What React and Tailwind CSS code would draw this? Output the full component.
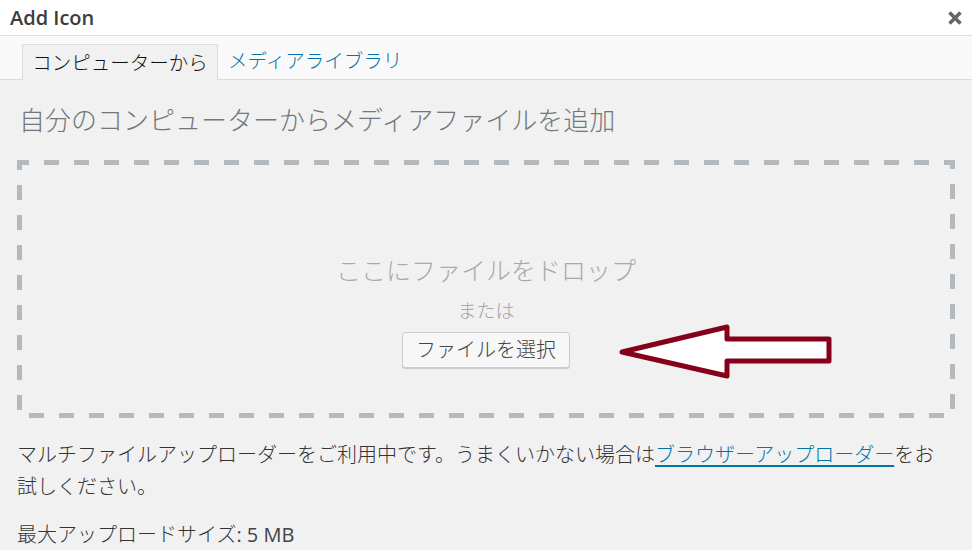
const font = { fontFamily: "'Open Sans', 'Noto Sans CJK JP', sans-serif" };

function CloseIcon() {
  return (
    <svg width="16" height="16" viewBox="0 0 16 16" className="block">
      <path d="M2.5 2.5 L13.5 13.5 M13.5 2.5 L2.5 13.5" stroke="#666" strokeWidth="3.6" strokeLinecap="butt" />
    </svg>
  );
}

function Arrow() {
  return (
    <svg
      width="220"
      height="60"
      viewBox="0 0 220 60"
      className="absolute left-[616px] top-[320px] pointer-events-none"
    >
      <path
        d="M6 32 L111 7 L111 19 L213 19 L213 41 L111 41 L111 56 Z"
        fill="#fff"
        stroke="#86001b"
        strokeWidth="5"
        strokeLinejoin="round"
      />
    </svg>
  );
}

// dashed outline of the drop zone, 5px dashes of 15 on / 15 off
function DashedFrame() {
  return (
    <svg className="absolute inset-0 w-full h-full pointer-events-none" preserveAspectRatio="none">
      <rect
        x="2.5"
        y="2.5"
        width="933"
        height="253"
        fill="none"
        stroke="#b4b9be"
        strokeWidth="5"
        strokeDasharray="15 15"
        strokeDashoffset="5.5"
      />
    </svg>
  );
}

export default function App() {
  return (
    <div className="relative w-[972px] h-[550px] overflow-hidden bg-[#f1f1f1]" style={font}>
      <header className="h-[36px] bg-white border-b border-[#dddddd] flex items-center justify-between pl-[10px] pr-[7px]">
        <h1 className="text-[20px] font-semibold text-[#3c3c3c] leading-none">Add Icon</h1>
        <button type="button" className="w-[20px] h-[20px] flex items-center justify-center">
          <CloseIcon />
        </button>
      </header>

      <nav className="h-[44px] bg-[#f9f9f9] border-b border-[#dddddd] flex items-end pl-[22px] font-light">
        <span className="w-[196px] h-[36px] -mb-px flex items-center justify-center border border-b-0 border-[#dddddd] bg-[#f1f1f1] text-[19.5px] text-[#111] leading-none">
          コンピューターから
        </span>
        <span className="ml-[10px] h-[36px] flex items-center text-[19.5px] text-[#0073aa] leading-none">
          メディアライブラリ
        </span>
      </nav>

      <main className="px-[17px] font-light">
        <h2 className="pt-[24px] text-[26px] leading-[32px] text-[#72777c] pl-[2px]">
          自分のコンピューターからメディアファイルを追加
        </h2>

        <div className="relative mt-[24px] h-[258px] flex flex-col items-center pt-[94px]">
          <DashedFrame />
          <p className="text-[25px] leading-[32px] text-[#a7aaad]">ここにファイルをドロップ</p>
          <p className="mt-[13px] text-[19px] leading-[24px] text-[#a0a5aa]">または</p>
          <button
            type="button"
            className="mt-[9px] w-[168px] h-[36px] bg-[#f7f7f7] border border-[#cccccc] rounded-[3px] shadow-[0_1px_0_#cccccc] text-[20px] text-[#444] leading-none"
          >
            ファイルを選択
          </button>
        </div>

        <p className="mt-[21px] text-[20px] leading-[32px] text-[#333]">
          マルチファイルアップローダーをご利用中です。うまくいかない場合は
          <a href="#" className="text-[#0073aa] underline underline-offset-[3px]">ブラウザーアップローダー</a>
          をお
          <br />
          試しください。
        </p>

        <p className="mt-[16px] text-[20px] leading-[32px] text-[#333]">
          最大アップロードサイズ<span className="font-normal text-[#444]">: 5 MB</span>
        </p>
      </main>

      <Arrow />
    </div>
  );
}
